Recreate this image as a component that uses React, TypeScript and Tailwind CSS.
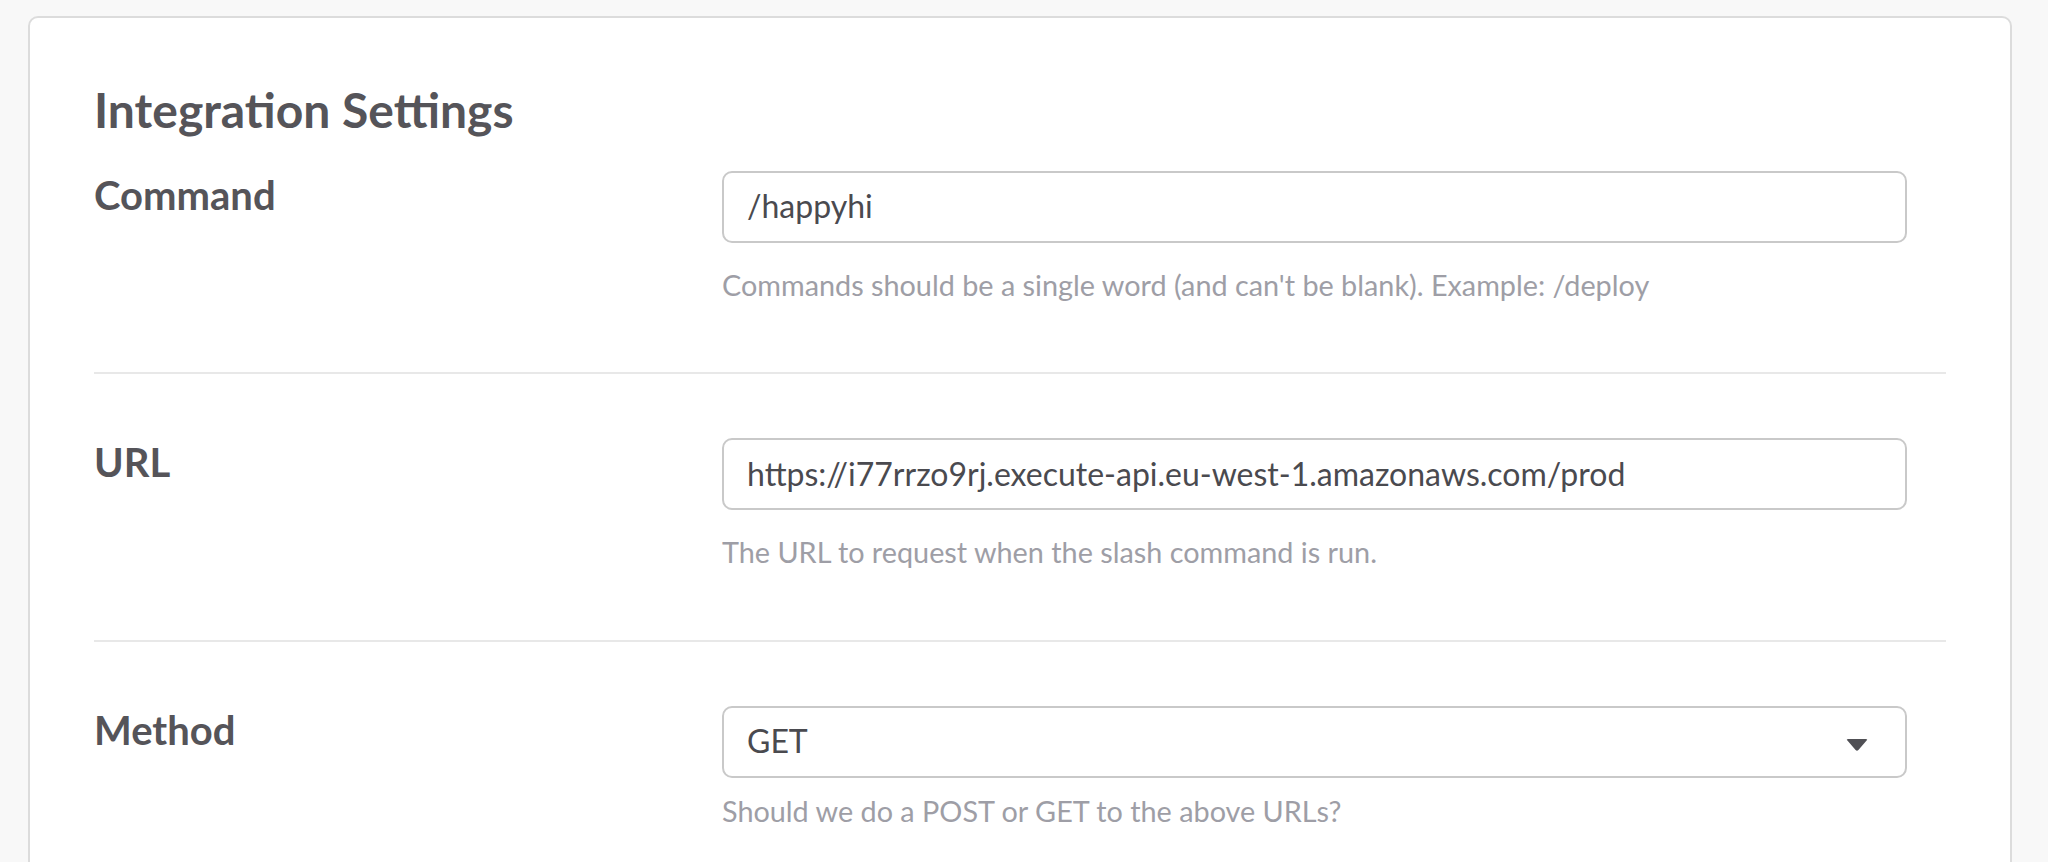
import React from "react";

const font = { fontFamily: "Lato, 'Noto Sans', sans-serif" };

function Row({
  label,
  help,
  children,
  last,
}: {
  label: string;
  help: string;
  children: React.ReactNode;
  last?: boolean;
}) {
  return (
    <div>
      <div className="flex">
        <div className="w-[628px] shrink-0 text-[40px] leading-[1.2] font-bold text-[#555459]">
          {label}
        </div>
        <div className="w-[1185px] flex flex-col">
          {children}
          <div
            className={
              (last ? "mt-[16px] " : "mt-[25px] ") +
              "text-[28.8px] leading-[1.2] text-[#9e9ea6]"
            }
          >
            {help}
          </div>
        </div>
      </div>
      {!last && <div className="mt-[70px] mb-[64px] h-[2px] bg-[#e8e8e8]" />}
    </div>
  );
}

function TextBox({ value }: { value: string }) {
  return (
    <div className="h-[72px] rounded-[10px] border-2 border-[#c9c9c9] bg-white pl-[23px] flex items-center text-[32px] leading-[1.2] text-[#4a4a4f]">
      {value}
    </div>
  );
}

export default function App() {
  return (
    <div style={font} className="h-[862px] overflow-hidden bg-[#f8f8f8] pt-[16px] pl-[28px]">
      <div className="w-[1984px] h-[1000px] rounded-[10px] border-2 border-[#dcdcdc] bg-white px-[64px] pt-[63px]">
        <h1 className="text-[48px] leading-[1.2] font-bold text-[#555459] mb-[32px]">
          Integration Settings
        </h1>
        <Row
          label="Command"
          help="Commands should be a single word (and can't be blank). Example: /deploy"
        >
          <TextBox value="/happyhi" />
        </Row>
        <Row label="URL" help="The URL to request when the slash command is run.">
          <TextBox value="https://i77rrzo9rj.execute-api.eu-west-1.amazonaws.com/prod" />
        </Row>
        <Row label="Method" help="Should we do a POST or GET to the above URLs?" last>
          <div className="h-[72px] rounded-[10px] border-2 border-[#c9c9c9] bg-white pl-[23px] pr-[37px] flex items-center justify-between text-[32px] leading-[1.2] text-[#4a4a4f]">
            <span>GET</span>
            <svg width="22" height="14" viewBox="0 0 22 14" className="mt-[7px]">
              <path
                d="M2 1 H20 Q22 1 20.6 2.6 L12.4 12 Q11 13.4 9.6 12 L1.4 2.6 Q0 1 2 1 Z"
                fill="#505055"
              />
            </svg>
          </div>
        </Row>
      </div>
    </div>
  );
}
